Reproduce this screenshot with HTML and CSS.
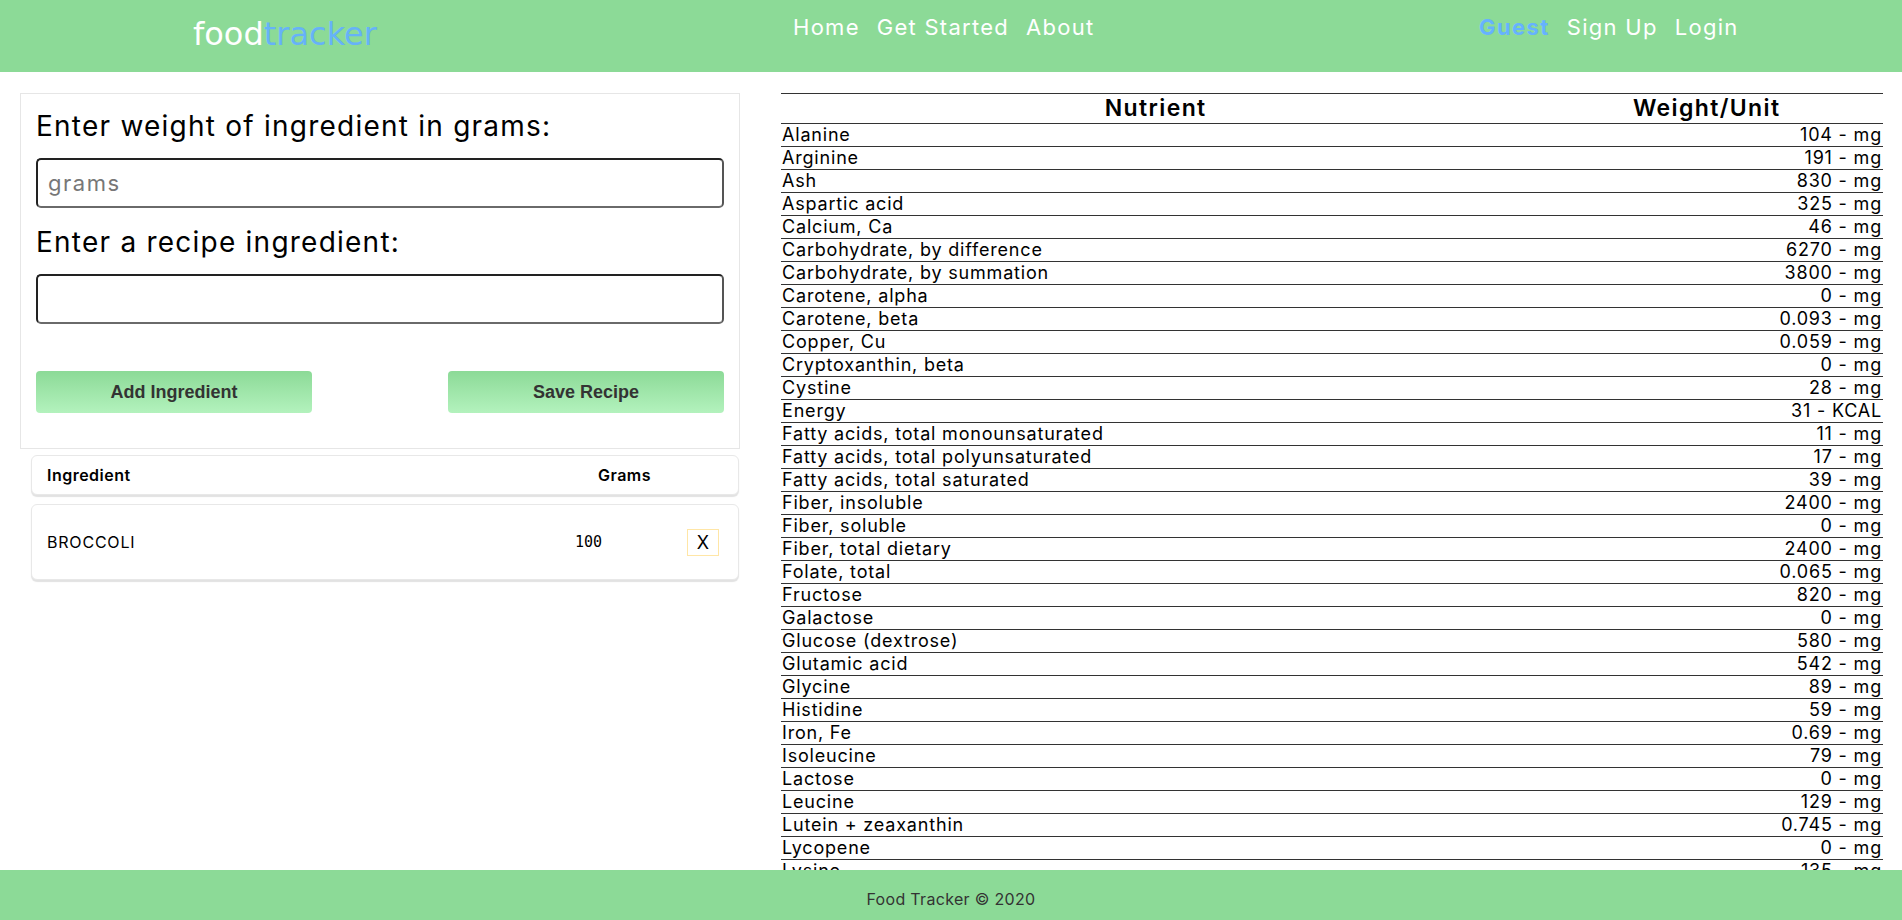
FILE: index.html
```html
<!DOCTYPE html>
<html lang="en">
<head>
<meta charset="utf-8">
<title>Food Tracker</title>
<link rel="stylesheet" href="styles.css">
</head>
<body>
<header class="topbar">
  <a class="logo" href="#"><span class="logo-food">food</span><span class="logo-tracker">tracker</span></a>
  <nav class="nav-main">
    <a href="#">Home</a>
    <a href="#">Get Started</a>
    <a href="#">About</a>
  </nav>
  <nav class="nav-user">
    <a class="guest" href="#">Guest</a>
    <a href="#">Sign Up</a>
    <a href="#">Login</a>
  </nav>
</header>

<main class="content">
  <section class="left">
    <div class="form-card">
      <h3 class="form-title">Enter weight of ingredient in grams:</h3>
      <input class="field" type="text" placeholder="grams">
      <h3 class="form-title">Enter a recipe ingredient:</h3>
      <input class="field" type="text">
      <div class="actions">
        <button class="btn">Add Ingredient</button>
        <button class="btn">Save Recipe</button>
      </div>
    </div>
    <div class="ing-card ing-head">
      <span class="ing-name">Ingredient</span>
      <span class="ing-grams ing-grams-head">Grams</span>
      <span></span>
    </div>
    <div class="ing-card ing-row">
      <span class="ing-name">BROCCOLI</span>
      <span class="ing-grams mono">100</span>
      <button class="del">X</button>
    </div>
  </section>

  <section class="right">
    <table class="nutrients">
      <thead>
        <tr><th class="col-name">Nutrient</th><th class="col-val">Weight/Unit</th></tr>
      </thead>
      <tbody>
        <tr><td>Alanine</td><td class="val">104 - mg</td></tr>
        <tr><td>Arginine</td><td class="val">191 - mg</td></tr>
        <tr><td>Ash</td><td class="val">830 - mg</td></tr>
        <tr><td>Aspartic acid</td><td class="val">325 - mg</td></tr>
        <tr><td>Calcium, Ca</td><td class="val">46 - mg</td></tr>
        <tr><td>Carbohydrate, by difference</td><td class="val">6270 - mg</td></tr>
        <tr><td>Carbohydrate, by summation</td><td class="val">3800 - mg</td></tr>
        <tr><td>Carotene, alpha</td><td class="val">0 - mg</td></tr>
        <tr><td>Carotene, beta</td><td class="val">0.093 - mg</td></tr>
        <tr><td>Copper, Cu</td><td class="val">0.059 - mg</td></tr>
        <tr><td>Cryptoxanthin, beta</td><td class="val">0 - mg</td></tr>
        <tr><td>Cystine</td><td class="val">28 - mg</td></tr>
        <tr><td>Energy</td><td class="val">31 - KCAL</td></tr>
        <tr><td>Fatty acids, total monounsaturated</td><td class="val">11 - mg</td></tr>
        <tr><td>Fatty acids, total polyunsaturated</td><td class="val">17 - mg</td></tr>
        <tr><td>Fatty acids, total saturated</td><td class="val">39 - mg</td></tr>
        <tr><td>Fiber, insoluble</td><td class="val">2400 - mg</td></tr>
        <tr><td>Fiber, soluble</td><td class="val">0 - mg</td></tr>
        <tr><td>Fiber, total dietary</td><td class="val">2400 - mg</td></tr>
        <tr><td>Folate, total</td><td class="val">0.065 - mg</td></tr>
        <tr><td>Fructose</td><td class="val">820 - mg</td></tr>
        <tr><td>Galactose</td><td class="val">0 - mg</td></tr>
        <tr><td>Glucose (dextrose)</td><td class="val">580 - mg</td></tr>
        <tr><td>Glutamic acid</td><td class="val">542 - mg</td></tr>
        <tr><td>Glycine</td><td class="val">89 - mg</td></tr>
        <tr><td>Histidine</td><td class="val">59 - mg</td></tr>
        <tr><td>Iron, Fe</td><td class="val">0.69 - mg</td></tr>
        <tr><td>Isoleucine</td><td class="val">79 - mg</td></tr>
        <tr><td>Lactose</td><td class="val">0 - mg</td></tr>
        <tr><td>Leucine</td><td class="val">129 - mg</td></tr>
        <tr><td>Lutein + zeaxanthin</td><td class="val">0.745 - mg</td></tr>
        <tr><td>Lycopene</td><td class="val">0 - mg</td></tr>
        <tr><td>Lysine</td><td class="val">135 - mg</td></tr>
        <tr><td>Magnesium, Mg</td><td class="val">21 - mg</td></tr>
        <tr><td>Maltose</td><td class="val">0 - mg</td></tr>
      </tbody>
    </table>
  </section>
</main>

<footer class="footer">Food Tracker © 2020</footer>
</body>
</html>
```

FILE: styles.css
```css
html {
  overflow: hidden;
}

body {
  margin: 0;
  font-family: "Inter", "DejaVu Sans", sans-serif;
  color: #000;
  background: #fff;
}

a {
  text-decoration: none;
}

/* ---------- header ---------- */
.topbar {
  height: 72px;
  background: #8cda97;
  display: grid;
  grid-template-columns: 600px 686px 1fr;
  align-items: start;
  padding-left: 193px;
}

.logo {
  font-family: "DejaVu Sans", sans-serif;
  font-size: 32px;
  line-height: 38px;
  margin-top: 15px;
}

.logo-food {
  color: #ffffff;
}

.logo-tracker {
  color: #66b2f8;
}

.nav-main,
.nav-user {
  display: flex;
  gap: 17px;
  margin-top: 11px;
}

.nav-main a,
.nav-user a {
  color: #fff;
  font-size: 22px;
  line-height: 33px;
  letter-spacing: 0.058em;
}

.nav-user a.guest {
  color: #66b2ff;
  font-weight: 700;
  letter-spacing: 0.065em;
}

/* ---------- main ---------- */
.content {
  display: grid;
  grid-template-columns: 720px 1fr;
  column-gap: 41px;
  padding: 21px 19px 0 20px;
  align-items: start;
}

.form-card {
  border: 1px solid #e6e6e6;
  padding: 16px 15px 35px;
}

.form-title {
  margin: 0 0 16px;
  font-size: 28px;
  font-weight: 400;
  line-height: 32px;
  letter-spacing: 0.044em;
}

.field {
  display: block;
  box-sizing: border-box;
  width: 100%;
  height: 50px;
  margin: 0 0 18px;
  padding: 0 10px;
  border: 2px solid #222;
  border-bottom-color: #6a6a6a;
  border-right-color: #555;
  border-radius: 5px;
  font-family: "Inter", sans-serif;
  font-size: 22px;
  letter-spacing: 0.07em;
  color: #333;
  background: #fff;
}

.field::placeholder {
  color: #777;
}

.actions {
  display: flex;
  justify-content: space-between;
  margin-top: 47px;
}

.btn {
  width: 276px;
  height: 42px;
  border: none;
  border-radius: 4px;
  background: linear-gradient(to bottom, #8cda97, #b3f2bd);
  font-family: "Liberation Sans", Arial, sans-serif;
  font-weight: 700;
  font-size: 18px;
  color: #333;
}

.ing-card {
  display: grid;
  grid-template-columns: 1fr 112px 32px;
  align-items: center;
  margin: 0 1px 0 11px;
  padding: 0 19px 0 15px;
  border: 1px solid #e8e8e8;
  border-radius: 6px;
  box-shadow: 0 2px 1px #e2e2e2;
  background: #fff;
}

.ing-head {
  margin-top: 6px;
  height: 38px;
  font-size: 16px;
  font-weight: 600;
  letter-spacing: 0.03em;
}

.ing-row {
  margin-top: 9px;
  height: 74px;
  font-size: 16px;
  letter-spacing: 0.05em;
}

.ing-grams-head {
  padding-left: 23px;
}

.mono {
  font-family: "DejaVu Sans Mono", monospace;
  font-size: 15px;
  letter-spacing: 0;
}

.del {
  width: 32px;
  height: 27px;
  padding: 0;
  border: 1px solid #ffe6a6;
  background: #fff;
  font-family: "Inter", sans-serif;
  font-size: 18px;
  color: #000;
}

/* ---------- nutrient table ---------- */
.nutrients {
  width: 100%;
  border-collapse: collapse;
  border-top: 1px solid #333;
}

.nutrients th {
  height: 29px;
  padding: 0;
  font-size: 23px;
  font-weight: 600;
  line-height: 29px;
  border-bottom: 1px solid #333;
  letter-spacing: 0.06em;
}

.col-name {
  width: 68%;
}

.nutrients td {
  height: 22px;
  padding: 0 1px;
  font-size: 18px;
  line-height: 22px;
  border-bottom: 1px solid #333;
  letter-spacing: 0.045em;
  white-space: nowrap;
}

.nutrients td.val {
  text-align: right;
}

/* ---------- footer ---------- */
.footer {
  position: fixed;
  left: 0;
  right: 0;
  bottom: 0;
  height: 50px;
  box-sizing: border-box;
  padding-top: 17px;
  background: #8cda97;
  color: #333;
  text-align: center;
  font-size: 16px;
  line-height: 24px;
  letter-spacing: 0.02em;
}
```
